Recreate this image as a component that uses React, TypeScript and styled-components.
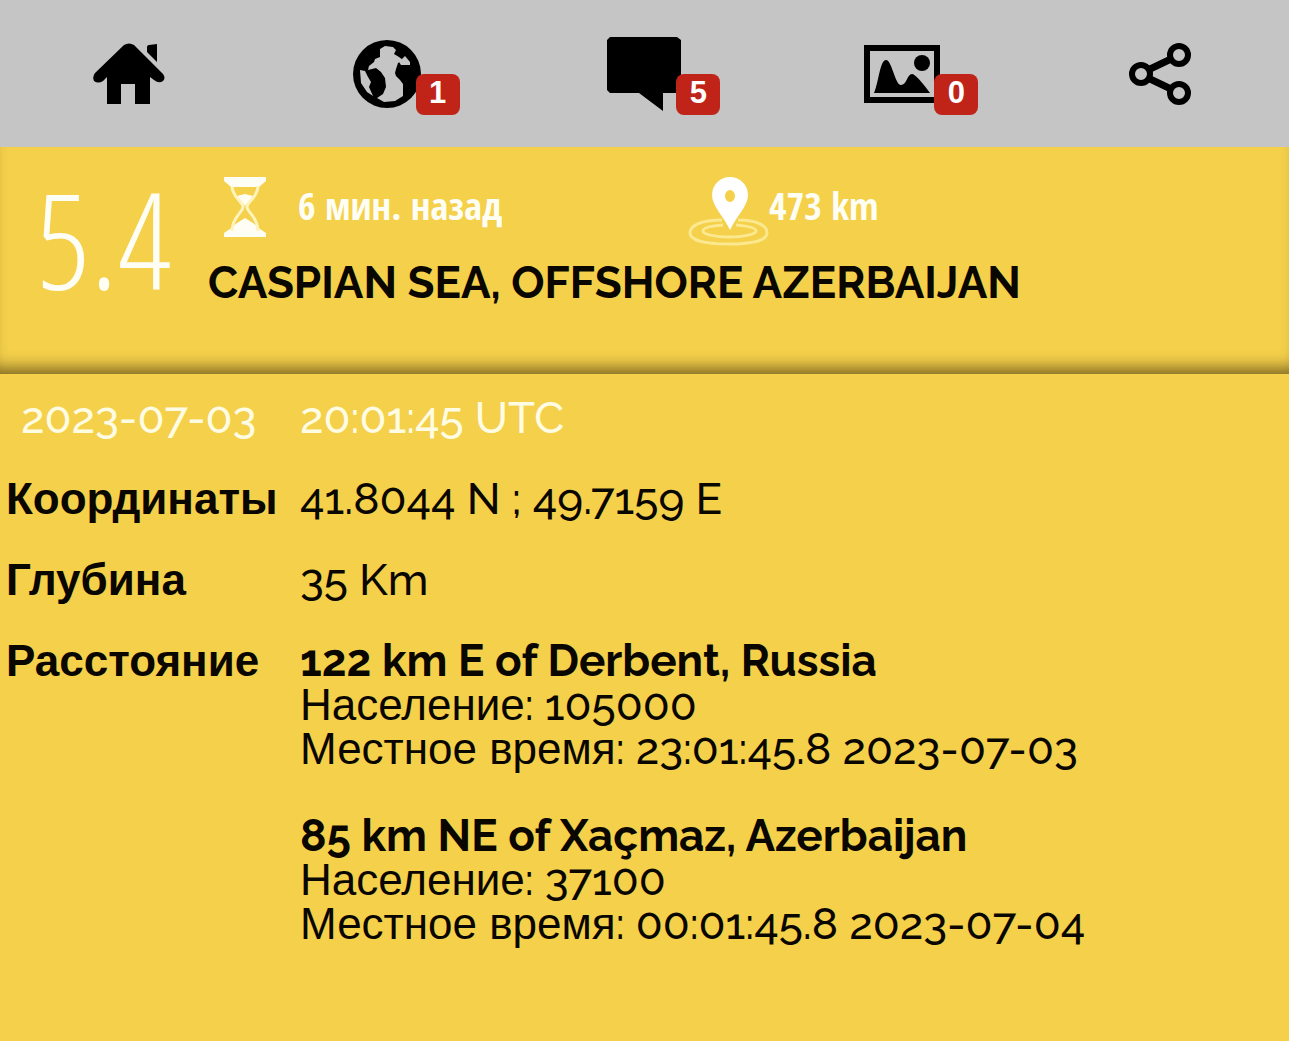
import React from 'react';
import styled, { createGlobalStyle } from 'styled-components';

const GlobalStyle = createGlobalStyle`
  *, *::before, *::after { box-sizing: border-box; }
  body {
    margin: 0;
    background: #f4d04b;
    color: #0a0700;
    font: 500 44px/44px Raleway, Lato, "Liberation Sans", sans-serif;
  }
  h1, p { margin: 0; }
`;

const Nav = styled.nav`
  display: grid;
  grid-template-columns: repeat(5, 1fr);
  height: 147px;
  background: #c5c5c5;
`;

const NavLink = styled.a`
  display: flex;
  align-items: center;
  justify-content: center;
  color: #000;
  text-decoration: none;
`;

const IconBox = styled.span`
  position: relative;
  display: flex;

  svg { display: block; }
`;

const Badge = styled.span`
  position: absolute;
  left: calc(100% - 6px);
  top: 50%;
  width: 44px;
  height: 41px;
  border-radius: 8px;
  background: #c02318;
  color: #fff;
  font: 700 31px/37px "Liberation Sans", Arial, sans-serif;
  text-align: center;
`;

const Summary = styled.header`
  display: grid;
  grid-template-columns: 208px 1fr;
  height: 227px;
  background: #f4d04b;
  box-shadow: inset 0 -16px 16px -10px rgba(60, 45, 10, 0.65);
`;

const Magnitude = styled.p`
  padding-top: 21px;
  color: #fffef4;
  font: 300 134px/140px "Open Sans Condensed Light", "Open Sans Condensed", "Roboto Condensed", sans-serif;
  text-align: center;
`;

const Facts = styled.div`
  display: flex;
  flex-direction: column;
  padding-top: 30px;
`;

const Stats = styled.div`
  display: grid;
  grid-template-columns: 480px 1fr;
  height: 72px;
`;

const Stat = styled.div<{ $gap: number; $inset: number }>`
  display: flex;
  align-items: flex-start;
  gap: ${p => p.$gap}px;
  padding-left: ${p => p.$inset}px;
  color: #fffef4;
  font: 700 38px/56px "Open Sans Condensed", "Roboto Condensed", sans-serif;
`;

const Region = styled.h1`
  padding-top: 12px;
  font-size: 44px;
  line-height: 44px;
  font-weight: 700;
`;

const Details = styled.table`
  width: 100%;
  margin-top: 4px;
  border-collapse: collapse;
`;

const Label = styled.th<{ $date?: boolean }>`
  width: 300px;
  padding: 18px 0 19px ${p => (p.$date ? 21 : 6)}px;
  color: ${p => (p.$date ? '#fffce4' : 'inherit')};
  font-family: ${p => (p.$date ? 'inherit' : '"Liberation Sans", Arial, sans-serif')};
  font-weight: ${p => (p.$date ? 500 : 700)};
  text-align: left;
  vertical-align: top;
  white-space: nowrap;
`;

const Value = styled.td<{ $date?: boolean }>`
  padding: 18px 0 19px;
  color: ${p => (p.$date ? '#fffce4' : 'inherit')};
  vertical-align: top;
`;

const Place = styled.div`
  & + & { margin-top: 43px; }
`;

const PlaceName = styled.p`
  font-weight: 700;
`;

const Cyr = styled.span`
  font-family: "Liberation Sans", Arial, sans-serif;
  font-weight: 400;
  line-height: 1;
`;

const HomeIcon = () => (
  <svg width="74" height="62" viewBox="0 0 74 62" fill="currentColor" aria-hidden="true">
    <path d="M32 2Q37-1 42 2L71 31Q74 35 71 38Q67 41 62 37L58 34V61H43V41H29V61H15V34L11 38Q6 41 2 38Q0 34 3 30Z" />
    <path d="M55 4Q55 2 57 2L65 1V19L55 9Z" />
  </svg>
);

const GlobeIcon = () => (
  <svg width="70" height="68" viewBox="-1 0 70 68" aria-hidden="true">
    <circle cx="34" cy="34" r="34" fill="currentColor" />
    <g fill="#c5c5c5">
      <path d="M27 9 32 6 40 7 43 10 41 14 46 17 50 20 45 23 43 29 42 33 43 36 47 40 50 44 50 56 42 61 31 62 24 58 30 54 33 47 32 38 28 32 23 28 15 30 16 26 21 22 22 19 27 17Z" />
      <path d="M7 30 12 31 15 37 18 42 16 47 20 56 14 52 8 43Z" />
      <path d="M46 22 52 16 57 22 57 25 48 25Z" />
    </g>
  </svg>
);

const SpeechIcon = () => (
  <svg width="76" height="75" viewBox="0 0 76 75" fill="currentColor" aria-hidden="true">
    <path d="M4 1H71L75 4V57H57V75L33 57H4L1 54V4Z" />
  </svg>
);

const PictureIcon = () => (
  <svg width="76" height="58" viewBox="0 0 76 58" fill="currentColor" aria-hidden="true">
    <rect x="3" y="3" width="70" height="52" fill="none" stroke="currentColor" strokeWidth="6" />
    <circle cx="58" cy="18" r="8" />
    <path d="M10 48C15 36 16 15 22 15S31 40 37 40S43 29 48 29Q52 29 66 48Z" />
  </svg>
);

const ShareIcon = () => (
  <svg width="64" height="64" viewBox="0 0 64 64" fill="none" stroke="currentColor" strokeWidth="6" aria-hidden="true">
    <circle cx="13" cy="32" r="9" />
    <circle cx="51" cy="13" r="9" />
    <circle cx="51" cy="51" r="9" />
    <path strokeWidth="7" d="m20 28 23-11M20 36l23 11" />
  </svg>
);

const HourglassIcon = () => (
  <svg width="42" height="60" viewBox="0 0 42 60" aria-hidden="true">
    <path fill="#fffef4" d="M0 0H42V4L35 10H7L0 4ZM0 60V56L6 52 13 46 21 41 29 46 36 52 42 56V60ZM13 19 21 17 29 19 21 29Z" />
    <path fill="none" stroke="#fff4bd" strokeWidth="3" d="M8 9C8 20 19 25 19 30S8 40 8 54M34 9C34 20 23 25 23 30S34 40 34 54" />
  </svg>
);

const PinIcon = () => (
  <svg width="81" height="70" viewBox="0 0 81 70" aria-hidden="true">
    <g fill="none" stroke="#fbe88f" strokeWidth="3">
      <path d="M34 43C12 43 2 49 2 56S16 67 41 67 79 63 79 56 70 43 50 43" />
      <path d="M35 48C22 49 15 51 15 54S26 60 41 60 68 57 68 54 60 49 48 48" />
    </g>
    <path fill="#fff" fillRule="evenodd" d="M42 0A18 18 0 0 1 60 18C60 29 48 40 42 53C36 40 24 29 24 18A18 18 0 0 1 42 0ZM37 19A5 6 0 1 0 47 19A5 6 0 1 0 37 19Z" />
  </svg>
);

const tabs = [
  { name: 'Главная', Icon: HomeIcon },
  { name: 'Карта', Icon: GlobeIcon, count: 1 },
  { name: 'Комментарии', Icon: SpeechIcon, count: 5 },
  { name: 'Фотографии', Icon: PictureIcon, count: 0 },
  { name: 'Поделиться', Icon: ShareIcon },
];

const places = [
  { name: '122 km E of Derbent, Russia', population: '105000', time: '23:01:45.8 2023-07-03' },
  { name: '85 km NE of Xaçmaz, Azerbaijan', population: '37100', time: '00:01:45.8 2023-07-04' },
];

export default function App() {
  return (
    <>
      <GlobalStyle />
      <Nav>
        {tabs.map(({ name, Icon, count }) => (
          <NavLink key={name} href="#" aria-label={name}>
            <IconBox>
              <Icon />
              {count !== undefined && <Badge>{count}</Badge>}
            </IconBox>
          </NavLink>
        ))}
      </Nav>
      <main>
        <Summary>
          <Magnitude>5.4</Magnitude>
          <Facts>
            <Stats>
              <Stat $gap={32} $inset={16}><HourglassIcon />6 мин. назад</Stat>
              <Stat $gap={0} $inset={0}><PinIcon />473 km</Stat>
            </Stats>
            <Region>CASPIAN SEA, OFFSHORE AZERBAIJAN</Region>
          </Facts>
        </Summary>
        <Details>
          <tbody>
            <tr>
              <Label scope="row" $date>2023-07-03</Label>
              <Value $date>20:01:45 UTC</Value>
            </tr>
            <tr>
              <Label scope="row">Координаты</Label>
              <Value>41.8044 N ; 49.7159 E</Value>
            </tr>
            <tr>
              <Label scope="row">Глубина</Label>
              <Value>35 Km</Value>
            </tr>
            <tr>
              <Label scope="row">Расстояние</Label>
              <Value>
                {places.map(place => (
                  <Place key={place.name}>
                    <PlaceName>{place.name}</PlaceName>
                    <p><Cyr>Население</Cyr>: {place.population}</p>
                    <p><Cyr>Местное время</Cyr>: {place.time}</p>
                  </Place>
                ))}
              </Value>
            </tr>
          </tbody>
        </Details>
      </main>
    </>
  );
}
